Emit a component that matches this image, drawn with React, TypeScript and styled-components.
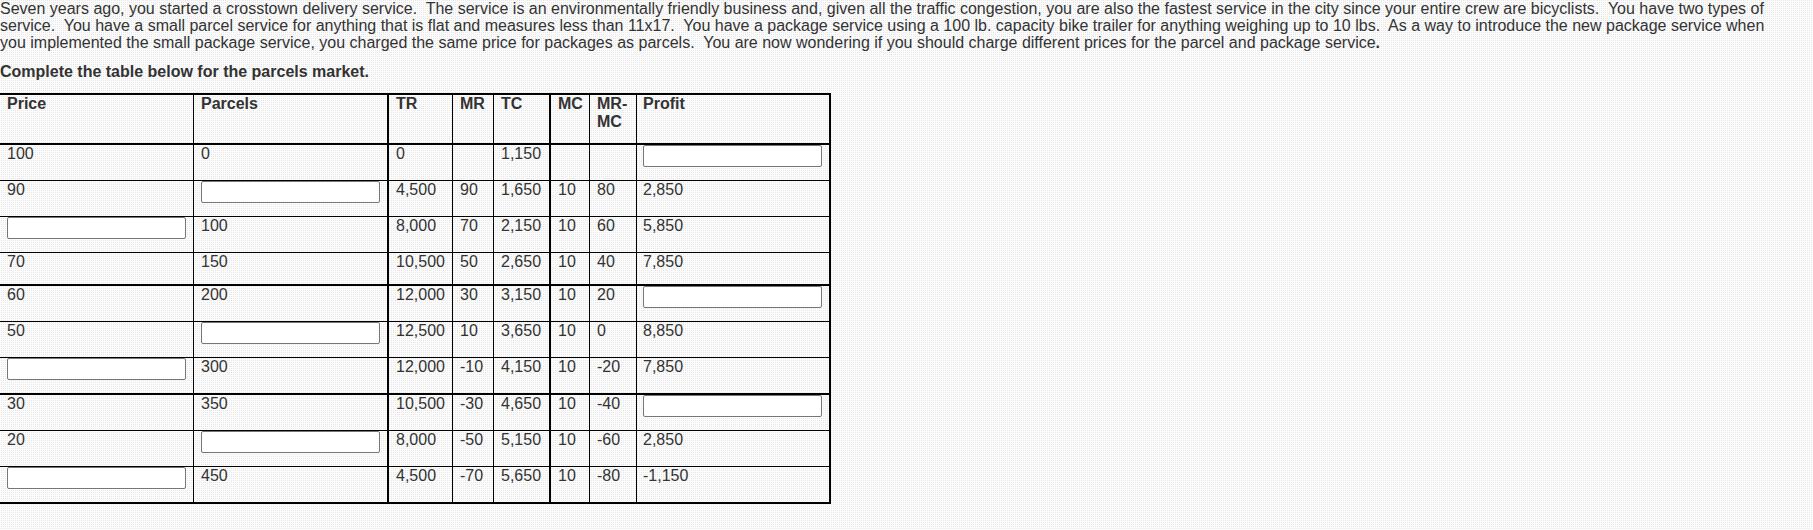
import React from "react";
import styled, { createGlobalStyle } from "styled-components";

const GlobalStyle = createGlobalStyle`
  html, body {
    margin: 0;
    padding: 0;
  }
  body {
    background-color: #fcfcfc;
    background-image: conic-gradient(#e8e8e8 0 25%, #fcfcfc 0 100%);
    background-size: 2px 2px;
    font-family: "Liberation Sans", Arial, sans-serif;
    color: #333;
  }
`;

const Page = styled.div`
  display: flex;
  flex-direction: column;
  align-items: flex-start;
`;

const Intro = styled.p`
  margin: 0;
  width: 1775px;
  font-size: 16px;
  line-height: 17px;
`;

const Prompt = styled.p`
  margin: 12px 0 0;
  font-size: 16px;
  line-height: 17px;
  font-weight: bold;
`;

const Table = styled.table`
  margin-top: 13px;
  border-collapse: separate;
  border-spacing: 0;
  table-layout: fixed;
  width: 831px;
  border-top: 2px solid #000;
  font-size: 16px;
  line-height: 18px;
`;

const Row = styled.tr<{ $h: number; $thick?: boolean }>`
  & > td,
  & > th {
    height: ${(p) => p.$h}px;
    border-bottom: ${(p) => (p.$thick ? 2 : 1)}px solid #000;
  }
`;

const cellBase = `
  box-sizing: border-box;
  vertical-align: top;
  text-align: left;
  padding: 0 0 0 7px;
  border-right-style: solid;
  border-right-color: #000;
  overflow: hidden;
  color: #333;
`;

const HeadCell = styled.th<{ $w: number; $br: number; $pl?: number }>`
  ${cellBase}
  width: ${(p) => p.$w}px;
  border-right-width: ${(p) => p.$br}px;
  padding-left: ${(p) => p.$pl ?? 7}px;
  font-weight: bold;
  padding-right: 4px;
`;

const Cell = styled.td<{ $br: number; $pl?: number }>`
  ${cellBase}
  border-right-width: ${(p) => p.$br}px;
  padding-left: ${(p) => p.$pl ?? 7}px;
  white-space: nowrap;
`;

const Field = styled.input`
  display: block;
  box-sizing: border-box;
  width: 179px;
  height: 22px;
  margin: 0;
  padding: 1px 2px;
  border: 1px solid #767676;
  border-radius: 2px;
  background: #fff;
  font-family: "Liberation Sans", Arial, sans-serif;
  font-size: 13px;
`;

type Val = string | null;

const columns = [
  { key: "Price", w: 194, br: 1, pl: 7 },
  { key: "Parcels", w: 195, br: 2, pl: 7 },
  { key: "TR", w: 64, br: 1, pl: 7 },
  { key: "MR", w: 41, br: 1, pl: 7 },
  { key: "TC", w: 57, br: 2, pl: 7 },
  { key: "MC", w: 39, br: 1, pl: 7 },
  { key: "MR-MC", w: 47, br: 1, pl: 7 },
  { key: "Profit", w: 194, br: 2, pl: 6 },
];

const data: { cells: Val[]; h: number; thick?: boolean }[] = [
  { cells: ["100", "0", "0", "", "1,150", "", "", null], h: 36 },
  { cells: ["90", null, "4,500", "90", "1,650", "10", "80", "2,850"], h: 36 },
  { cells: [null, "100", "8,000", "70", "2,150", "10", "60", "5,850"], h: 36 },
  { cells: ["70", "150", "10,500", "50", "2,650", "10", "40", "7,850"], h: 33, thick: true },
  { cells: ["60", "200", "12,000", "30", "3,150", "10", "20", null], h: 36 },
  { cells: ["50", null, "12,500", "10", "3,650", "10", "0", "8,850"], h: 36 },
  { cells: [null, "300", "12,000", "-10", "4,150", "10", "-20", "7,850"], h: 37, thick: true },
  { cells: ["30", "350", "10,500", "-30", "4,650", "10", "-40", null], h: 36 },
  { cells: ["20", null, "8,000", "-50", "5,150", "10", "-60", "2,850"], h: 36 },
  { cells: [null, "450", "4,500", "-70", "5,650", "10", "-80", "-1,150"], h: 37, thick: true },
];

const introText =
  "Seven years ago, you started a crosstown delivery service.\u00a0 The service is an environmentally friendly business and, given all the traffic congestion, you are also the fastest service in the city since your entire crew are bicyclists.\u00a0 You have two types of service.\u00a0 You have a small parcel service for anything that is flat and measures less than 11x17.\u00a0 You have a package service using a 100 lb. capacity bike trailer for anything weighing up to 10 lbs.\u00a0 As a way to introduce the new package service when you implemented the small package service, you charged the same price for packages as parcels.\u00a0 You are now wondering if you should charge different prices for the parcel and package service";

export default function App() {
  return (
    <>
      <GlobalStyle />
      <Page>
        <Intro>
          {introText}
          <strong>.</strong>
        </Intro>
        <Prompt>Complete the table below for the parcels market.</Prompt>
        <Table>
          <thead>
            <Row $h={50} $thick>
              {columns.map((c) => (
                <HeadCell key={c.key} $w={c.w} $br={c.br} $pl={c.pl}>
                  {c.key}
                </HeadCell>
              ))}
            </Row>
          </thead>
          <tbody>
            {data.map((r, i) => (
              <Row key={i} $h={r.h} $thick={r.thick}>
                {r.cells.map((v, j) => (
                  <Cell key={j} $br={columns[j].br} $pl={columns[j].pl}>
                    {v === null ? <Field type="text" aria-label={columns[j].key} /> : v}
                  </Cell>
                ))}
              </Row>
            ))}
          </tbody>
        </Table>
      </Page>
    </>
  );
}
